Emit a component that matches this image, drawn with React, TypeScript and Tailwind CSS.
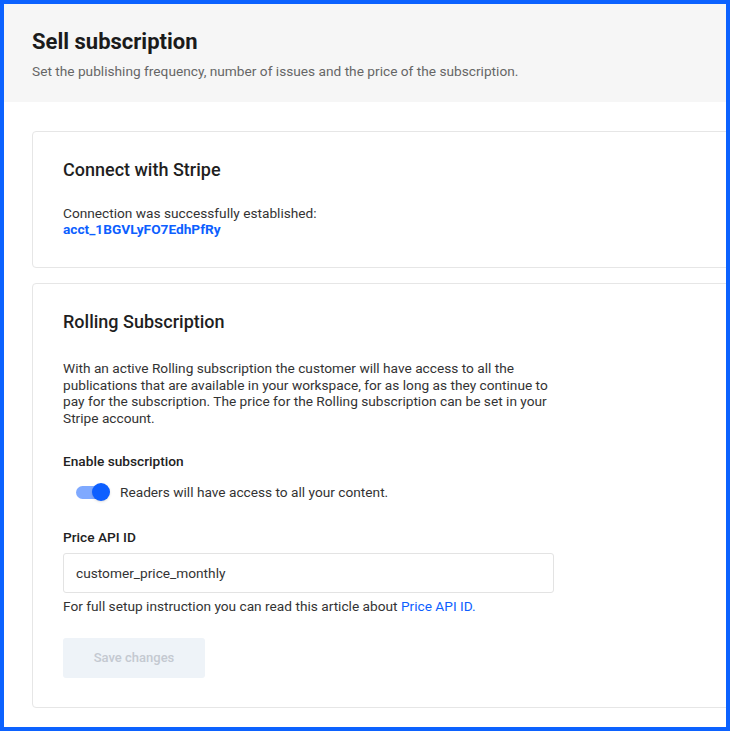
import React, { useState } from 'react';

const Toggle = ({ on, onChange }: { on: boolean; onChange: () => void }) => (
  <button
    type="button"
    onClick={onChange}
    className="relative w-[36px] h-[20px] flex items-center shrink-0"
  >
    <span className={`block w-[30px] h-[13px] rounded-full ml-[1px] ${on ? 'bg-[#7fa9ff]' : 'bg-[#c9ced6]'}`} />
    <span
      className={`absolute top-[1px] w-[18px] h-[18px] rounded-full shadow-sm ${on ? 'left-[17px] bg-[#0d5fff]' : 'left-0 bg-white'}`}
    />
  </button>
);

const App = () => {
  const [enabled, setEnabled] = useState(true);
  const [priceId, setPriceId] = useState('customer_price_monthly');

  return (
    <div
      className="w-[730px] h-[731px] border-4 border-[#0c62ff] overflow-hidden bg-white text-[#2b2b2b]"
      style={{ fontFamily: 'Roboto, "Liberation Sans", sans-serif' }}
    >
      {/* header */}
      <div className="bg-[#f6f6f6] pl-7 pt-6 pb-[21px]">
        <h1 className="text-[22px] leading-[28px] font-bold text-[#1b1b1b]">Sell subscription</h1>
        <p className="mt-[5px] text-[13.7px] leading-[20px] text-[#666]">
          Set the publishing frequency, number of issues and the price of the subscription.
        </p>
      </div>

      <div className="pl-7 pt-[29px] flex flex-col gap-[15px]">
        {/* stripe card */}
        <div className="w-[720px] border border-[#e6e6e6] rounded-[4px] pl-[30px] pt-[26px] pb-[30px]">
          <h2 className="text-[18px] leading-[24px] font-medium text-[#1f1f1f]">Connect with Stripe</h2>
          <div className="mt-[23px] text-[13.7px] leading-[16px]">
            <p className="text-[#333]">Connection was successfully established:</p>
            <a href="#" className="font-bold text-[#0d5fff]">acct_1BGVLyFO7EdhPfRy</a>
          </div>
        </div>

        {/* rolling subscription card */}
        <div className="w-[720px] border border-[#e6e6e6] rounded-[4px] pl-[30px] pt-[26px] pb-[29px]">
          <h2 className="text-[18px] leading-[24px] font-medium text-[#1f1f1f]">Rolling Subscription</h2>
          <p className="mt-[26px] w-[492px] text-[13.7px] leading-[16.5px] text-[#333]">
            With an active Rolling subscription the customer will have access to all the publications that are
            available in your workspace, for as long as they continue to pay for the subscription. The price for the
            Rolling subscription can be set in your Stripe account.
          </p>

          <p className="mt-[25px] text-[13.7px] leading-[20px] font-medium text-[#222]">Enable subscription</p>
          <div className="mt-[11px] ml-3 flex items-center gap-[9px]">
            <Toggle on={enabled} onChange={() => setEnabled(!enabled)} />
            <span className="text-[13.7px] leading-[20px] text-[#333]">Readers will have access to all your content.</span>
          </div>

          <label className="block mt-[25px] text-[13.7px] leading-[20px] font-medium text-[#222]">Price API ID</label>
          <input
            value={priceId}
            onChange={(e) => setPriceId(e.target.value)}
            className="mt-[6px] w-[491px] h-[40px] border border-[#e3e3e3] rounded-[3px] pl-3 text-[13.7px] text-[#333] outline-none"
          />
          <p className="mt-[5px] text-[13.7px] leading-[16px] text-[#333]">
            For full setup instruction you can read this article about{' '}
            <a href="#" className="text-[#0d5fff]">Price API ID.</a>
          </p>

          <button
            type="button"
            disabled
            className="mt-6 w-[142px] h-[40px] rounded-[3px] bg-[#eef3f8] text-[13px] font-medium text-[#c4c9d1]"
          >
            Save changes
          </button>
        </div>
      </div>
    </div>
  );
};

export default App;
